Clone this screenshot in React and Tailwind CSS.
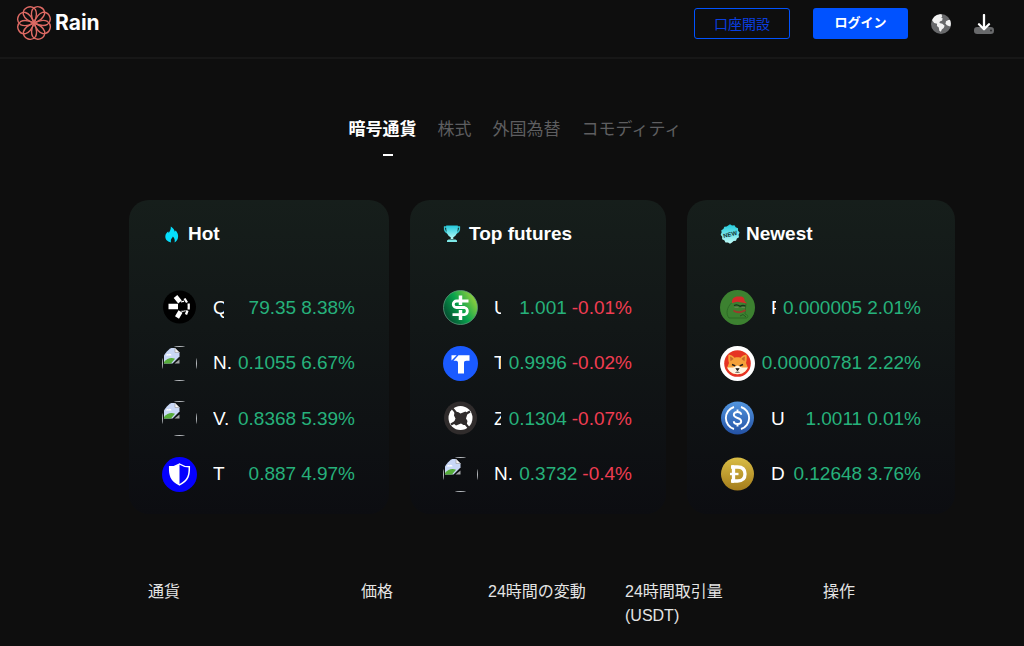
import { useState } from "react";
import clsx from "clsx";

const TABS = ["暗号通貨", "株式", "外国為替", "コモディティ"];

const MARKETS = [
  {
    title: "Hot",
    icon: FlameIcon,
    coins: [
      { icon: QuantIcon, name: "Q", clip: "w-[11px]", price: "79.35", change: "8.38%" },
      { icon: BrokenImage, name: "N.", clip: "w-5", price: "0.1055", change: "6.67%" },
      { icon: BrokenImage, name: "V.", clip: "w-4", price: "0.8368", change: "5.39%" },
      { icon: TrustIcon, name: "T", clip: "w-3", price: "0.887", change: "4.97%" },
    ],
  },
  {
    title: "Top futures",
    icon: TrophyIcon,
    coins: [
      { icon: DollarIcon, name: "U", clip: "w-[7px]", price: "1.001", change: "-0.01%" },
      { icon: TrueUsdIcon, name: "T", clip: "w-[7px]", price: "0.9996", change: "-0.02%" },
      { icon: ZrxIcon, name: "Z", clip: "w-[7px]", price: "0.1304", change: "-0.07%" },
      { icon: BrokenImage, name: "N.", clip: "w-5", price: "0.3732", change: "-0.4%" },
    ],
  },
  {
    title: "Newest",
    icon: NewBadgeIcon,
    coins: [
      { icon: PepeIcon, name: "P", clip: "w-[5px]", price: "0.000005", change: "2.01%" },
      { icon: ShibaIcon, name: "", clip: "w-0", price: "0.00000781", change: "2.22%" },
      { icon: UsdcIcon, name: "U", clip: "w-4", price: "1.0011", change: "0.01%" },
      { icon: DogeIcon, name: "D", clip: "w-4", price: "0.12648", change: "3.76%" },
    ],
  },
];

function RainLogo() {
  return (
    <svg viewBox="0 0 36 36" className="size-9" fill="none" stroke="#de6a64" strokeWidth="1.4" aria-hidden="true">
      {[22, 67, 112, 157, 202, 247, 292, 337].map((angle) => (
        <path
          key={angle}
          transform={`rotate(${angle} 18 18)`}
          d="M18 18C14 14.500 11 11 11.500 6C12.500 2.500 15 1 18 1S23.500 2.500 24.500 6C25 11 22 14.500 18 18Z"
        />
      ))}
    </svg>
  );
}

function GlobeIcon() {
  return (
    <svg viewBox="0 0 20 20" className="size-5" aria-hidden="true">
      <circle cx="10" cy="10" r="10" fill="#68696b" />
      <path d="M1.2 6.2C2.7 2.4 6 .3 10.5.3l.7 2.2-1 1 1.4.8-.4 2.2-2.3 1-.5 1.4 3 .8 2.2 2-.9 2.3-1.9 1.6-.9 2.2-1.6-1-.5-3.2-1.9-1.6.2-2.3-2.9-.7-1.9-2.500Z" fill="#f2f2f2" />
      <path d="m15 7.2 2.3-1.3 1.7.2c1 2.1 1.1 4.5.3 6.500l-1.700-.7-2.100-.9-.9-1.800Z" fill="#f2f2f2" />
    </svg>
  );
}

function DownloadIcon() {
  return (
    <svg viewBox="0 0 20 20" className="size-5" aria-hidden="true">
      <rect y="13" width="20" height="7" rx="3.2" fill="#68696b" />
      <circle cx="17" cy="16.5" r="1" fill="#29292a" />
      <path d="M10 1v14M5 10.2l5 5 5-5" fill="none" stroke="#fff" strokeWidth="2.3" strokeLinecap="round" strokeLinejoin="round" />
    </svg>
  );
}

function FlameIcon() {
  return (
    <svg viewBox="0 0 20 20" className="size-5" aria-hidden="true">
      <path d="M8.800 2.500c2.500 1.700 3.600 3.300 4 5.200l.9-1.100c1.700 2 2.600 4 2.400 6.100-.2 2.900-1.600 4.800-3.500 5.700.5-2.300 0-4.400-1.800-5.900-.2.900-.5 1.200-1 1.700-.9.900-1.200 2.300-.8 4.200-3.200-.7-5.700-2.600-5.700-5.900 0-2.400 1.600-4.100 3-5l.4 1.500C8 7.300 9.100 5 8.800 2.500Z" fill="#05defc" />
    </svg>
  );
}

function TrophyIcon() {
  return (
    <svg viewBox="0 0 20 20" className="size-5" aria-hidden="true">
      <defs>
        <linearGradient id="trophy" x1="0" y1="0" x2="0" y2="1">
          <stop stopColor="#22c9dc" />
          <stop offset="1" stopColor="#b7fbf7" />
        </linearGradient>
      </defs>
      <path d="M4 3H1.500c-.3 3 1 5.700 4.500 6.500M14 3h2.500c.3 3-1 5.700-4.500 6.500" fill="none" stroke="#35c6d2" strokeWidth="1.300" />
      <path d="M3.200 1.500h11.600c.4 6-1.300 10.500-4.500 11.700v1.800H7.700v-1.800C4.500 12 2.800 7.500 3.200 1.500Z" fill="url(#trophy)" />
      <path d="M5.500 15.500h7l1.500 1v1.500H4v-1.500Z" fill="#7ee9e8" />
    </svg>
  );
}

function NewBadgeIcon() {
  return (
    <svg viewBox="0 0 20 20" className="size-5" aria-hidden="true">
      <defs>
        <linearGradient id="badge" x1="0" y1="0" x2="0" y2="1">
          <stop stopColor="#1fcbdc" />
          <stop offset="1" stopColor="#c2fcf7" />
        </linearGradient>
      </defs>
      <path d="m10 .3 2 1.300 2.500-.3 1.200 2 2.300 1 .1 2.400 1.500 1.900-1 2.200.4 2.400-2.100 1.300-.9 2.300-2.400.2L12 18.500l-2 1.200-2-1.200-2.500-.1-1.200-2.100-2.200-1.100.1-2.400L.7 10.800l.9-2.200-.3-2.400 2.100-1.300.9-2.200 2.400-.3Z" fill="url(#badge)" />
      <text x="10" y="12.500" textAnchor="middle" fontSize="6" fontWeight="900" fill="#12383a" transform="rotate(-14 10 10)">NEW</text>
    </svg>
  );
}

function QuantIcon() {
  return (
    <svg viewBox="0 0 35 35" className="size-[35px]" aria-hidden="true">
      <circle cx="17.500" cy="17" r="16.500" fill="#000" />
      <g stroke="#fff" fill="none">
        <path d="M6.500 16.500H16" strokeWidth="5.500" />
        <path d="m13.500 6.500 4.500 5.500M18.500 21.500 15 27.500" strokeWidth="4.600" />
        <path d="M22.500 8.500 25 12.500M26.700 13.500v6M25.500 20.500 24 24.500" strokeWidth="2.300" />
        <path d="m19 12.300 3-1M19.500 21.300l4-.8" strokeWidth="1.500" />
      </g>
      <circle cx="21" cy="16.500" r="4.200" fill="#000" />
    </svg>
  );
}

// What Chrome shows for a rounded <img> whose source is missing
function BrokenImage() {
  return (
    <svg viewBox="0 0 35 35" className="size-[35px]" aria-hidden="true">
      <defs>
        <clipPath id="round">
          <circle cx="17.500" cy="17.500" r="17.500" />
        </clipPath>
      </defs>
      <g clipPath="url(#round)">
        <rect x=".5" y=".5" width="34" height="34" fill="none" stroke="#b8bcc0" />
        <path d="M2 2h11l4.500 4.500v4L10.500 17.500H2Z" fill="#c9d8f6" />
        <path d="M13 2v4.500h4.500Z" fill="#f4f4f4" stroke="#999" strokeWidth=".6" />
        <path d="M4 9.500c0-1.500 2-2 2.500-1 .8-1.500 3-.8 3 1Z" fill="#fff" />
        <path d="M2 17.500v-1.500c3-3.500 7-5 11-3.200L9 17.500Z" fill="#57ad3b" />
        <path d="M17.500 13.500v4h-5Z" fill="#a4a6a7" />
      </g>
    </svg>
  );
}

function TrustIcon() {
  return (
    <svg viewBox="0 0 35 35" className="size-[35px]" aria-hidden="true">
      <circle cx="17.500" cy="17.500" r="17.500" fill="#0500ff" />
      <path d="M17.500 7c3 2 6 2.800 9.800 2.800.2 8-.8 13.500-9.800 18-9-4.500-10-10-9.800-18C11.500 9.800 14.500 9 17.500 7Z" fill="none" stroke="#fff" strokeWidth="1.500" />
      <path d="M17.500 7v20.800c-9-4.500-10-10-9.800-18C11.500 9.800 14.500 9 17.500 7Z" fill="#fff" />
    </svg>
  );
}

function DollarIcon() {
  return (
    <svg viewBox="0 0 35 35" className="size-[35px]" aria-hidden="true">
      <defs>
        <linearGradient id="green" x1="0" y1=".8" x2="1" y2=".2">
          <stop stopColor="#04402c" />
          <stop offset=".5" stopColor="#08a34d" />
          <stop offset="1" stopColor="#a5d63b" />
        </linearGradient>
      </defs>
      <circle cx="17.500" cy="17.500" r="17" fill="url(#green)" stroke="#5d9a7c" strokeWidth=".8" />
      <path d="M25.500 11H13.500a3.200 3.200 0 0 0 0 6.500h8a3.700 3.700 0 0 1 0 7.200H9.500" fill="none" stroke="#fff" strokeWidth="2.800" />
      <path d="M17.500 5.500V15M17.500 20v10" stroke="#fff" strokeWidth="3.500" />
    </svg>
  );
}

function TrueUsdIcon() {
  return (
    <svg viewBox="0 0 35 35" className="size-[35px]" aria-hidden="true">
      <circle cx="17.500" cy="17.500" r="17.500" fill="#1a5aff" />
      <path d="M8.500 9.200h5.200L8.500 14.500ZM15.500 9.200h11v5.600h-3.200c-1.500 0-2.300.8-2.300 2.300v10.300h-6V17c0-1.300-.5-2-1.800-2.200h-2.700Z" fill="#fff" />
    </svg>
  );
}

function ZrxIcon() {
  return (
    <svg viewBox="0 0 35 35" className="size-[35px]" aria-hidden="true">
      <circle cx="17.500" cy="17" r="16.500" fill="#302c2c" />
      <circle cx="17.500" cy="17" r="12" fill="#fff" />
      <path d="m11.500 11 3.500 0 2.500 1.500 5-2 2 2-1.500 5 1.500 2.500-1 4-3 0-2.500-1.500-5 2-2.500-2 2-5-1.500-3Z" fill="#302c2c" />
      <path d="m9.500 7.500 5 6M27 10.500l-6 3.500M25.500 26.500l-5-6M8 23.500l6-3.500" stroke="#302c2c" strokeWidth="2.200" />
    </svg>
  );
}

function PepeIcon() {
  return (
    <svg viewBox="0 0 35 35" className="size-[35px]" aria-hidden="true">
      <circle cx="17.500" cy="17.500" r="17.500" fill="#3c8130" />
      <path d="M11.500 13C7 17 5.500 24 9 28h18c1.500-1.500 1-3-2-4l1-11" fill="none" stroke="#2b6825" strokeWidth=".9" />
      <path d="M12 13c-.5-5 3-7 7-6.500 4-.5 6 1.500 5.500 4.500l2.700 2.500-4-.8-6-1Z" fill="#d12b28" />
      <path d="M14 15.500c3-1.500 5 0 6 .8 2-1 4-1 5.500 0" fill="none" stroke="#17351b" strokeWidth="1.300" />
      <path d="M14.500 17.300h4M21.500 17.300h3.500" stroke="#6f8457" strokeWidth="1" />
      <path d="M13.500 20.500c3 2 8 2 12-.3" fill="none" stroke="#9a3b2c" strokeWidth="2" />
      <path d="m20 26 3-1.500 3 2.500" fill="none" stroke="#245a20" />
    </svg>
  );
}

function ShibaIcon() {
  return (
    <svg viewBox="0 0 35 35" className="size-[35px]" aria-hidden="true">
      <circle cx="17.500" cy="17.500" r="17.500" fill="#fff" />
      <circle cx="17.500" cy="17.500" r="13.300" fill="#e63323" />
      <path d="M8.500 8.500c2.500.3 4.500 1.600 6 3.200 2-.5 4-.5 6 0 1.500-1.600 3.500-2.900 6-3.200.5 3.300.2 6.300-.5 8.500l1.800 4.500c-1.800 4-5.300 6.700-10.300 6.700S9 25.500 7.200 21.500L9 17c-.7-2.200-1-5.200-.5-8.500Z" fill="#f5a13a" />
      <path d="M10 10.500c1.500.5 2.700 1.500 3.500 2.600l-3 2.100ZM25 10.500c-1.500.5-2.700 1.500-3.500 2.600l3 2.100Z" fill="#c7682c" />
      <path d="M7.200 21.500 13 21.500l4.500-2 4.500 2 5.800 0c-1.800 4-5.300 6.700-10.300 6.700S9 25.500 7.200 21.500Z" fill="#fff3df" />
      <path d="m12 18.500 3.300 1.400M23 18.500l-3.300 1.400" stroke="#1d1a1a" strokeWidth="1.500" />
      <path d="M15.800 22.500h3.400l-1.700 2.400ZM15.500 26.500c1.300-.7 2.700-.7 4 0" fill="#1d1a1a" stroke="#1d1a1a" strokeWidth=".6" />
    </svg>
  );
}

function UsdcIcon() {
  return (
    <svg viewBox="0 0 35 35" className="size-[35px]" aria-hidden="true">
      <defs>
        <linearGradient id="usdc" x1="0" y1="0" x2="0" y2="1">
          <stop stopColor="#5396df" />
          <stop offset="1" stopColor="#2351a4" />
        </linearGradient>
      </defs>
      <circle cx="17.500" cy="17" r="16.500" fill="url(#usdc)" />
      <path d="M14 6a11.500 11.500 0 0 0 0 22M21 6a11.500 11.500 0 0 1 0 22" fill="none" stroke="#fff" strokeWidth="1.900" />
      <path d="M21.200 13.800c0-3.800-7.400-3.800-7.400 0s7.400 2.600 7.400 6.400-7.400 3.800-7.400 0M17.500 8.500v2.500M17.500 23v2.500" fill="none" stroke="#fff" strokeWidth="1.900" />
    </svg>
  );
}

function DogeIcon() {
  return (
    <svg viewBox="0 0 35 35" className="size-[35px]" aria-hidden="true">
      <defs>
        <linearGradient id="doge" x1="0" y1="0" x2="0" y2="1">
          <stop stopColor="#d9bd45" />
          <stop offset="1" stopColor="#a47c1b" />
        </linearGradient>
      </defs>
      <circle cx="17.500" cy="17" r="16.500" fill="url(#doge)" />
      <path d="M13.500 10h4c5 0 7.500 2.500 7.500 7s-2.500 7-7.500 7h-4Z" fill="none" stroke="#fff" strokeWidth="3.300" />
      <path d="M10 17h8.500" stroke="#fff" strokeWidth="2.400" />
      <path d="M11 10h3M11 24h3" stroke="#fff" strokeWidth="3.300" />
    </svg>
  );
}

function CoinRow({ coin }) {
  const Icon = coin.icon;
  return (
    <li className="flex items-center whitespace-nowrap">
      <Icon />
      {coin.name && (
        <span className={clsx("ml-4 shrink-0 overflow-hidden text-white", coin.clip)}>{coin.name}</span>
      )}
      <span className="ml-auto flex gap-[5px]">
        <span className="text-[#26b17b]">{coin.price}</span>
        <span className={coin.change.startsWith("-") ? "text-[#f03d52]" : "text-[#26b17b]"}>
          {coin.change}
        </span>
      </span>
    </li>
  );
}

function MarketCard({ market }) {
  const Icon = market.icon;
  return (
    <section className="rounded-[20px] bg-linear-to-b from-[#161e1b] to-[#0c0d11] pt-5 pr-[34px] pb-3 pl-[33px] text-[19px]">
      <h2 className="flex h-7 items-center gap-[6px] font-bold text-white">
        <Icon />
        {market.title}
      </h2>
      <ul className="mt-8 grid h-[222px] grid-rows-4">
        {market.coins.map((coin) => (
          <CoinRow key={coin.price} coin={coin} />
        ))}
      </ul>
    </section>
  );
}

export default function App() {
  const [activeTab, setActiveTab] = useState(TABS[0]);

  return (
    <div className="min-h-screen bg-[#0e0e0e] font-['Liberation_Sans','Noto_Sans_CJK_JP',sans-serif]">
      <header className="flex items-start justify-between border-b-2 border-[#171717] pr-[30px] pb-4 pl-4">
        <a href="#" className="flex items-center gap-[3px] pt-[5px] font-['Inter',sans-serif] text-[21px] leading-9 font-bold text-white">
          <RainLogo />
          Rain
        </a>
        <div className="flex items-center pt-2 text-sm">
          <button type="button" className="h-[31px] w-24 rounded-[3px] border border-[#0052ff] text-[#0a3fe0]">
            口座開設
          </button>
          <button type="button" className="ml-[23px] h-[31px] w-[95px] rounded-[3px] bg-[#0052ff] text-[13px] font-bold text-white">
            ログイン
          </button>
          <button type="button" aria-label="言語" className="ml-[23px]">
            <GlobeIcon />
          </button>
          <button type="button" aria-label="ダウンロード" className="ml-[23px]">
            <DownloadIcon />
          </button>
        </div>
      </header>

      <main>
        <nav className="flex justify-center gap-[21px] pt-[57px] pl-[6px] text-[17px] leading-7">
          {TABS.map((tab) => (
            <button
              key={tab}
              type="button"
              onClick={() => setActiveTab(tab)}
              className={clsx(
                "flex flex-col gap-[10px]",
                tab === activeTab ? "font-bold text-white" : "text-[#5e5e60]"
              )}
            >
              {tab}
              {tab === activeTab && <span className="ml-[50%] h-[2px] w-[10px] bg-white" />}
            </button>
          ))}
        </nav>

        <div className="mt-11 mr-[69px] ml-[129px] grid grid-cols-[260fr_256fr_268fr] gap-[21px]">
          {MARKETS.map((market) => (
            <MarketCard key={market.title} market={market} />
          ))}
        </div>

        <div className="mt-[66px] mr-[69px] ml-[148px]">
          <table className="w-full table-fixed text-left text-base text-[#e4e4e4]">
            <thead>
              <tr className="align-top">
                <th className="w-[213px] font-normal">通貨</th>
                <th className="w-[127px] font-normal">価格</th>
                <th className="w-[137px] font-normal">24時間の変動</th>
                <th className="w-[198px] font-normal">
                  24時間取引量
                  <br />
                  (USDT)
                </th>
                <th className="font-normal">操作</th>
              </tr>
            </thead>
          </table>
        </div>
      </main>
    </div>
  );
}
